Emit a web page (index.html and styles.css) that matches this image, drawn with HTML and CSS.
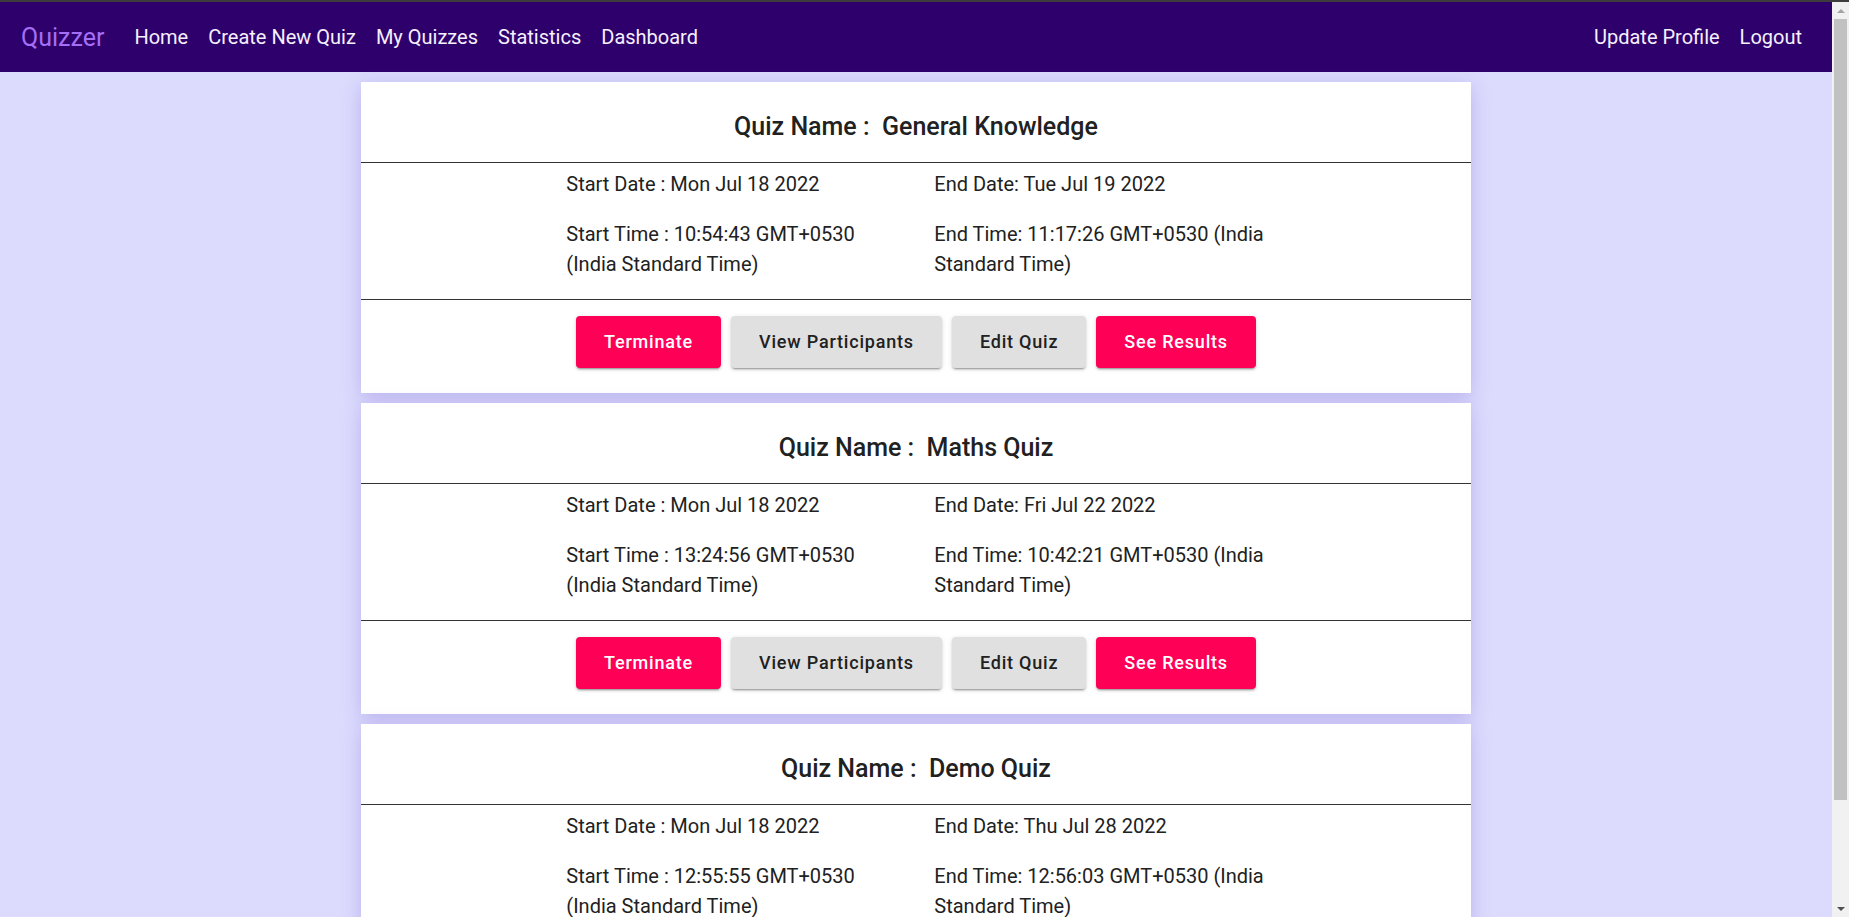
FILE: index.html
```html
<!DOCTYPE html>
<html lang="en">
<head>
<meta charset="utf-8">
<title>Quizzer</title>
<link rel="stylesheet" href="styles.css">
</head>
<body>
<div class="topline"></div>
<div class="frame">
  <div class="page">
    <nav class="navbar">
      <div class="nav-left">
        <span class="brand">Quizzer</span>
        <a class="nav-link">Home</a>
        <a class="nav-link">Create New Quiz</a>
        <a class="nav-link">My Quizzes</a>
        <a class="nav-link">Statistics</a>
        <a class="nav-link">Dashboard</a>
      </div>
      <div class="nav-right">
        <a class="nav-link">Update Profile</a>
        <a class="nav-link">Logout</a>
      </div>
    </nav>
    <main class="list">
      <section class="card">
        <div class="card-head"><h2 class="title">Quiz Name :&nbsp; General Knowledge</h2></div>
        <div class="details">
          <p class="cell">Start Date : Mon Jul 18 2022</p>
          <p class="cell">End Date: Tue Jul 19 2022</p>
          <p class="cell">Start Time : 10:54:43 GMT+0530 (India Standard Time)</p>
          <p class="cell">End Time: 11:17:26 GMT+0530 (India Standard Time)</p>
        </div>
        <div class="actions">
          <button class="btn btn-pink">Terminate</button>
          <button class="btn btn-grey">View Participants</button>
          <button class="btn btn-grey">Edit Quiz</button>
          <button class="btn btn-pink">See Results</button>
        </div>
      </section>
      <section class="card">
        <div class="card-head"><h2 class="title">Quiz Name :&nbsp; Maths Quiz</h2></div>
        <div class="details">
          <p class="cell">Start Date : Mon Jul 18 2022</p>
          <p class="cell">End Date: Fri Jul 22 2022</p>
          <p class="cell">Start Time : 13:24:56 GMT+0530 (India Standard Time)</p>
          <p class="cell">End Time: 10:42:21 GMT+0530 (India Standard Time)</p>
        </div>
        <div class="actions">
          <button class="btn btn-pink">Terminate</button>
          <button class="btn btn-grey">View Participants</button>
          <button class="btn btn-grey">Edit Quiz</button>
          <button class="btn btn-pink">See Results</button>
        </div>
      </section>
      <section class="card">
        <div class="card-head"><h2 class="title">Quiz Name :&nbsp; Demo Quiz</h2></div>
        <div class="details">
          <p class="cell">Start Date : Mon Jul 18 2022</p>
          <p class="cell">End Date: Thu Jul 28 2022</p>
          <p class="cell">Start Time : 12:55:55 GMT+0530 (India Standard Time)</p>
          <p class="cell">End Time: 12:56:03 GMT+0530 (India Standard Time)</p>
        </div>
        <div class="actions">
          <button class="btn btn-pink">Terminate</button>
          <button class="btn btn-grey">View Participants</button>
          <button class="btn btn-grey">Edit Quiz</button>
          <button class="btn btn-pink">See Results</button>
        </div>
      </section>
    </main>
  </div>
  <div class="scrollbar" aria-hidden="true">
    <div class="sb-btn"><span class="tri-up"></span></div>
    <div class="sb-thumb"></div>
    <div class="sb-track"></div>
    <div class="sb-btn"><span class="tri-down"></span></div>
  </div>
</div>
</body>
</html>
```
FILE: styles.css
```css
* { box-sizing: border-box; }

html, body {
  margin: 0;
  height: 100%;
  overflow: hidden;
}

body {
  font-family: Roboto, "Liberation Sans", Arial, sans-serif;
  color: #212121;
  background: #dcdbfd;
  display: flex;
  flex-direction: column;
}

.topline {
  height: 2px;
  flex: none;
  background: #3d3d3d;
}

.frame {
  flex: 1;
  display: flex;
  min-height: 0;
}

.page {
  flex: 1;
  min-width: 0;
  overflow: hidden;
  background: #dcdbfd;
}

/* imitation of the window's classic scrollbar */
.scrollbar {
  width: 17px;
  flex: none;
  background: #f1f1f1;
  display: flex;
  flex-direction: column;
}

.sb-btn {
  height: 17px;
  flex: none;
  display: flex;
  align-items: center;
  justify-content: center;
}

.tri-up {
  width: 0;
  height: 0;
  border-left: 4px solid transparent;
  border-right: 4px solid transparent;
  border-bottom: 4px solid #a3a3a3;
}

.tri-down {
  width: 0;
  height: 0;
  border-left: 4px solid transparent;
  border-right: 4px solid transparent;
  border-top: 4px solid #505050;
}

.sb-thumb {
  height: 781px;
  flex: none;
  margin: 0 2px;
  background: #c1c1c1;
}

.sb-track {
  flex: 1;
}

.navbar {
  height: 70px;
  background: #2e006b;
  display: flex;
  align-items: center;
  justify-content: space-between;
  padding: 0 30px 0 21px;
}

.nav-left, .nav-right {
  display: flex;
  align-items: center;
  gap: 20px;
}

.brand {
  font-size: 25px;
  color: #a56ef6;
  margin-right: 10px;
}

.nav-link {
  font-size: 20px;
  color: #f6f0ff;
  text-decoration: none;
}

.list {
  padding: 10px 0 10px;
  display: flex;
  flex-direction: column;
  gap: 10px;
}

.card {
  width: 60vw;
  margin: 0 auto;
  background: #fff;
  box-shadow: 0 4px 18px rgba(100, 80, 200, 0.28);
}

.card-head {
  height: 81px;
  padding-top: 9px;
  display: flex;
  align-items: center;
  justify-content: center;
  border-bottom: 1px solid #333;
}

.title {
  margin: 0;
  font-size: 25px;
  font-weight: 500;
  line-height: 1.5;
}

.details {
  display: grid;
  grid-template-columns: 340px 340px;
  column-gap: 28px;
  row-gap: 20px;
  padding: 6px 0 20px 205px;
  border-bottom: 1px solid #333;
}

.cell {
  margin: 0;
  font-size: 20px;
  line-height: 30px;
}

.actions {
  display: flex;
  justify-content: center;
  gap: 10px;
  padding: 16px 0 25px;
}

.btn {
  font-family: Roboto, "Liberation Sans", Arial, sans-serif;
  font-size: 18px;
  font-weight: 500;
  letter-spacing: 0.8px;
  line-height: 32px;
  padding: 10px 28px;
  border: 0;
  border-radius: 4px;
  box-shadow: 0 3px 1px -2px rgba(0,0,0,0.2), 0 2px 2px 0 rgba(0,0,0,0.14), 0 1px 5px 0 rgba(0,0,0,0.12);
}

.btn-pink {
  background: #ff0057;
  color: #fff;
}

.btn-grey {
  background: #e0e0e0;
  color: #212121;
}
```
